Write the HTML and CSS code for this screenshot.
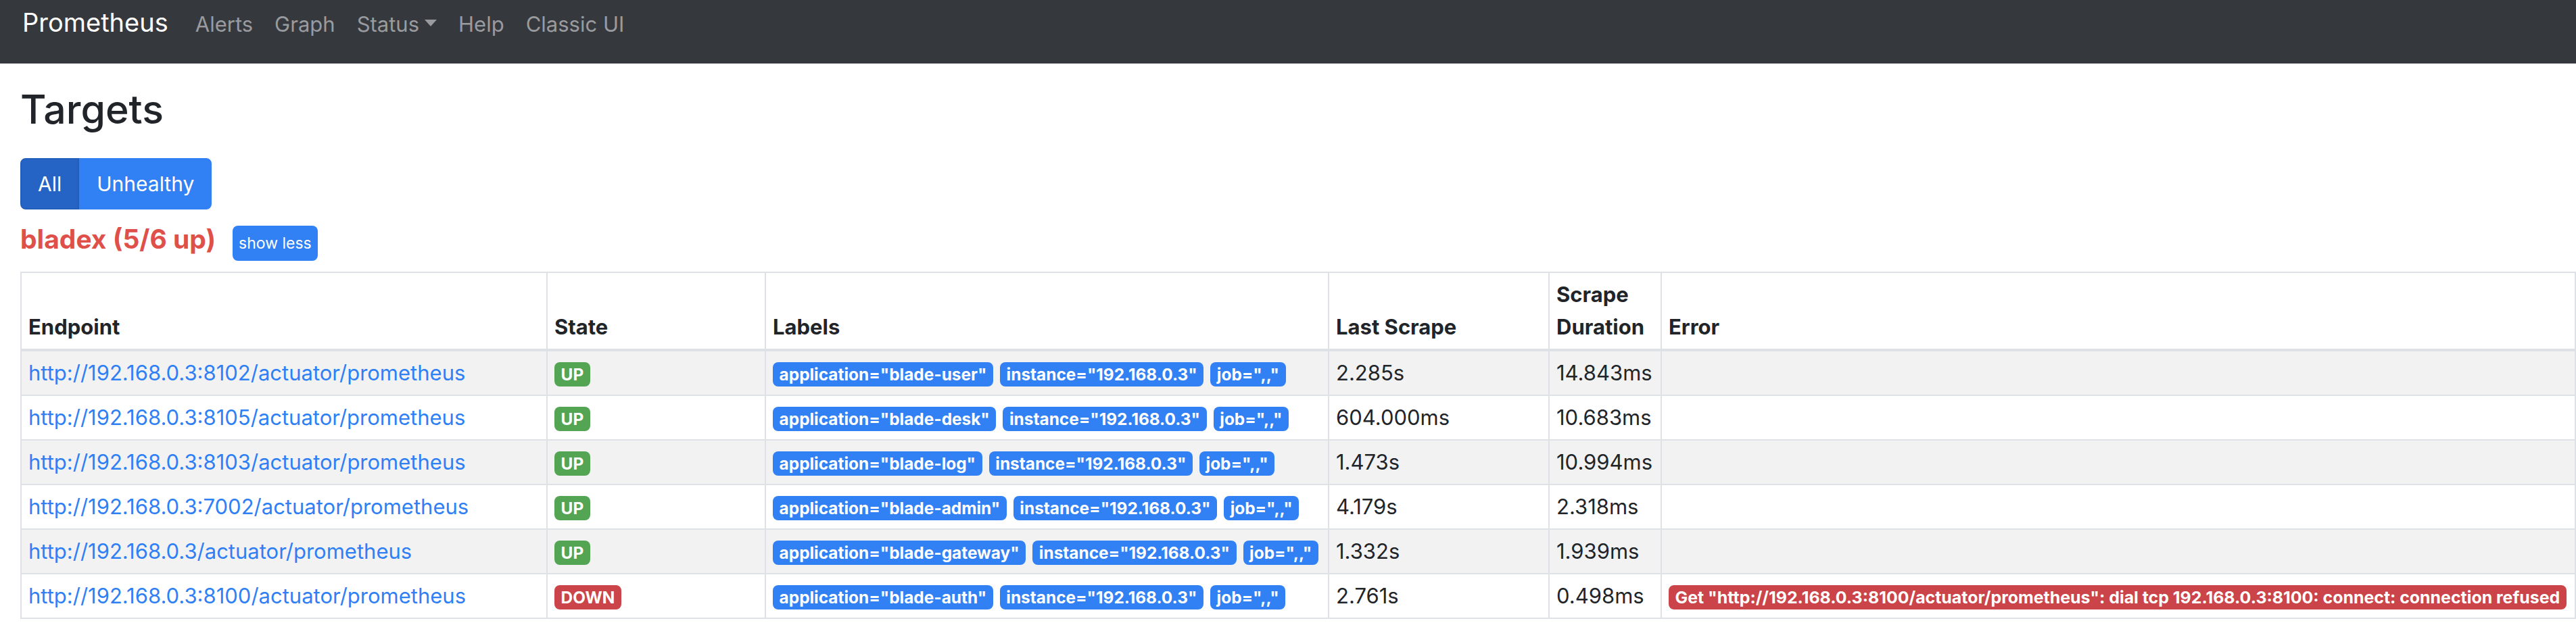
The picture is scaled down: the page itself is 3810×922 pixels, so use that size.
FILE: index.html
```html
<!DOCTYPE html>
<html lang="en">
<head>
<meta charset="utf-8">
<title>Prometheus Time Series Collection and Processing Server</title>
<link rel="stylesheet" href="styles.css">
</head>
<body>
<nav class="navbar">
  <a class="brand" href="#">Prometheus</a>
  <a class="nav-link" href="#">Alerts</a>
  <a class="nav-link" href="#">Graph</a>
  <a class="nav-link dropdown" href="#">Status</a>
  <a class="nav-link" href="#">Help</a>
  <a class="nav-link" href="#">Classic UI</a>
</nav>
<main class="page">
  <h2 class="title">Targets</h2>
  <div class="btn-group"><button class="btn btn-active">All</button><button class="btn">Unhealthy</button></div>
  <div class="pool-header">
    <a class="pool-name" href="#bladex">bladex (5/6 up)</a>
    <button class="btn-xs">show less</button>
  </div>
  <table class="targets">
    <colgroup>
      <col class="c-endpoint"><col class="c-state"><col class="c-labels"><col class="c-last"><col class="c-dur"><col class="c-error">
    </colgroup>
    <thead>
      <tr><th>Endpoint</th><th>State</th><th>Labels</th><th>Last Scrape</th><th>Scrape Duration</th><th>Error</th></tr>
    </thead>
    <tbody>
      <tr>
        <td><a class="endpoint" href="#">http://192.168.0.3:8102/actuator/prometheus</a></td>
        <td><span class="badge badge-success">UP</span></td>
        <td class="labels"><span class="badge badge-primary">application="blade-user"</span><span class="badge badge-primary">instance="192.168.0.3"</span><span class="badge badge-primary">job=",,"</span></td>
        <td>2.285s</td>
        <td>14.843ms</td>
        <td></td>
      </tr>
      <tr>
        <td><a class="endpoint" href="#">http://192.168.0.3:8105/actuator/prometheus</a></td>
        <td><span class="badge badge-success">UP</span></td>
        <td class="labels"><span class="badge badge-primary">application="blade-desk"</span><span class="badge badge-primary">instance="192.168.0.3"</span><span class="badge badge-primary">job=",,"</span></td>
        <td>604.000ms</td>
        <td>10.683ms</td>
        <td></td>
      </tr>
      <tr>
        <td><a class="endpoint" href="#">http://192.168.0.3:8103/actuator/prometheus</a></td>
        <td><span class="badge badge-success">UP</span></td>
        <td class="labels"><span class="badge badge-primary">application="blade-log"</span><span class="badge badge-primary">instance="192.168.0.3"</span><span class="badge badge-primary">job=",,"</span></td>
        <td>1.473s</td>
        <td>10.994ms</td>
        <td></td>
      </tr>
      <tr>
        <td><a class="endpoint" href="#">http://192.168.0.3:7002/actuator/prometheus</a></td>
        <td><span class="badge badge-success">UP</span></td>
        <td class="labels"><span class="badge badge-primary">application="blade-admin"</span><span class="badge badge-primary">instance="192.168.0.3"</span><span class="badge badge-primary">job=",,"</span></td>
        <td>4.179s</td>
        <td>2.318ms</td>
        <td></td>
      </tr>
      <tr>
        <td><a class="endpoint" href="#">http://192.168.0.3/actuator/prometheus</a></td>
        <td><span class="badge badge-success">UP</span></td>
        <td class="labels"><span class="badge badge-primary">application="blade-gateway"</span><span class="badge badge-primary">instance="192.168.0.3"</span><span class="badge badge-primary">job=",,"</span></td>
        <td>1.332s</td>
        <td>1.939ms</td>
        <td></td>
      </tr>
      <tr>
        <td><a class="endpoint" href="#">http://192.168.0.3:8100/actuator/prometheus</a></td>
        <td><span class="badge badge-danger">DOWN</span></td>
        <td class="labels"><span class="badge badge-primary">application="blade-auth"</span><span class="badge badge-primary">instance="192.168.0.3"</span><span class="badge badge-primary">job=",,"</span></td>
        <td>2.761s</td>
        <td>0.498ms</td>
        <td><span class="badge badge-danger badge-error">Get "http://192.168.0.3:8100/actuator/prometheus": dial tcp 192.168.0.3:8100: connect: connection refused</span></td>
      </tr>
    </tbody>
  </table>
</main>
</body>
</html>
```
FILE: styles.css
```css
* { box-sizing: border-box; }
html, body { margin: 0; padding: 0; }
body {
  font-family: Inter, "Liberation Sans", Arial, sans-serif;
  font-size: 31px;
  line-height: 48px;
  color: #212529;
  background: #fff;
  overflow: hidden;
}
a { text-decoration: none; }

.navbar {
  display: flex;
  align-items: baseline;
  height: 94px;
  background: #35393e;
  padding: 14px 0 0 33px;
}
.brand {
  color: #fff;
  font-size: 38px;
  line-height: 1;
  margin-right: 24px;
}
.nav-link {
  color: #9a9b9e;
  font-size: 31px;
  line-height: 1;
  padding: 0 16px;
}
.dropdown::after {
  content: "";
  display: inline-block;
  margin-left: 8px;
  vertical-align: 8px;
  border-top: 10px solid;
  border-left: 9.5px solid transparent;
  border-right: 9.5px solid transparent;
}

.page { padding: 0 2px 0 30px; }
.title {
  font-size: 59px;
  font-weight: 500;
  line-height: 1.2;
  margin: 33px 0 0 0;
}
.btn-group {
  display: inline-flex;
  margin-top: 36px;
  vertical-align: top;
}
.btn {
  font-family: inherit;
  font-size: 30px;
  line-height: 48px;
  padding: 12px 24px;
  border: 2px solid #3281f4;
  background: #3281f4;
  color: #fff;
  margin: 0;
}
.btn:first-child { border-radius: 8px 0 0 8px; }
.btn:last-child { border-radius: 0 8px 8px 0; }
.btn-active { background: #2563c4; border-color: #245ebb; }

.pool-header {
  display: flex;
  align-items: baseline;
  gap: 25px;
  margin-top: 24px;
}
.pool-name {
  color: #e0504a;
  font-size: 39px;
  font-weight: 700;
  line-height: 1;
}
.btn-xs {
  font-family: inherit;
  font-size: 23px;
  line-height: 36px;
  padding: 8px 9px;
  border: 0;
  border-radius: 8px;
  background: #3281f4;
  color: #fff;
}

.targets {
  margin-top: 16px;
  border-collapse: collapse;
  table-layout: fixed;
  width: 3778px;
}
.c-endpoint { width: 778px; }
.c-state { width: 323px; }
.c-labels { width: 833px; }
.c-last { width: 326px; }
.c-dur { width: 166px; }
.c-error { width: 1352px; }
.targets th,
.targets td {
  border: 2px solid #dee2e6;
  padding: 8px 10px;
  text-align: left;
  vertical-align: top;
  white-space: nowrap;
}
.targets thead th {
  vertical-align: bottom;
  border-bottom-width: 4px;
  font-weight: 700;
  white-space: normal;
}
.targets tbody tr:nth-child(odd) { background: #f2f2f2; }
.endpoint { color: #2f7ff5; }

.badge {
  display: inline-block;
  font-size: 24.4px;
  font-weight: 700;
  line-height: 1;
  padding: 6px 9.6px;
  border-radius: 8px;
  color: #fff;
  white-space: nowrap;
}
.badge-success { background: #53a453; }
.badge-danger { background: #cb444a; }
.badge-primary { background: #3281f4; }
.badge-error { font-size: 24.9px; padding: 5.75px 9.6px; }
.labels .badge { margin-right: 10px; }
```
